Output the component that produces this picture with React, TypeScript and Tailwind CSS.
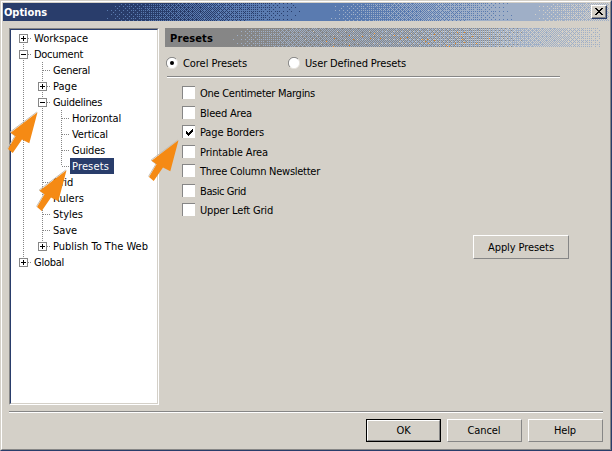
import { useLayoutEffect, useRef, useState } from "react";
import type { ReactNode } from "react";

/** Text fitted to a given pixel width by adjusting its tracking. */
function Label({ text, w, className = "" }: { text: string; w: number; className?: string }) {
  const ref = useRef<HTMLSpanElement>(null);
  const [tracking, setTracking] = useState(0);
  useLayoutEffect(() => {
    const el = ref.current;
    if (el) setTracking((w - el.getBoundingClientRect().width) / text.length);
  }, [text, w]);
  return (
    <span ref={ref} className={`inline-block whitespace-pre ${className}`} style={{ letterSpacing: `${tracking}px` }}>
      {text}
    </span>
  );
}

const BAYER = [
  [0, 32, 8, 40, 2, 34, 10, 42],
  [48, 16, 56, 24, 50, 18, 58, 26],
  [12, 44, 4, 36, 14, 46, 6, 38],
  [60, 28, 52, 20, 62, 30, 54, 22],
  [3, 35, 11, 43, 1, 33, 9, 41],
  [51, 19, 59, 27, 49, 17, 57, 25],
  [15, 47, 7, 39, 13, 45, 5, 37],
  [63, 31, 55, 23, 61, 29, 53, 21],
];

/** Deterministic pseudo-random value in 0..1 for a pixel. */
function noise(x: number, y: number) {
  let n = Math.imul(x + 11, 374761393) ^ Math.imul(y + 7, 668265263);
  n = Math.imul(n ^ (n >>> 13), 1274126177);
  return ((n ^ (n >>> 16)) >>> 0) / 4294967296;
}

/** x position followed by the share of each palette colour there. */
type Stop = [number, ...number[]];

/** Gradient made of 1px dots of a small palette. */
function Dither({ w, h, palette, stops, sparks = false }: { w: number; h: number; palette: string[]; stops: Stop[]; sparks?: boolean }) {
  const paths: Record<string, string> = {};
  for (let y = 0; y < h; y++) {
    for (let x = 0; x < w; x++) {
      let i = 0;
      while (i < stops.length - 2 && x >= stops[i + 1][0]) i++;
      const a = stops[i];
      const b = stops[i + 1];
      const t = (x - a[0]) / (b[0] - a[0]);
      const r = noise(x, y);
      const th = Math.max(0.002, (BAYER[y % 8][x % 8] + 0.5) / 64 + (r - 0.5) * 0.08);
      let k = 0;
      let sum = a[1] + (b[1] - a[1]) * t;
      while (k < palette.length - 1 && th >= sum && sum < 0.9999) {
        k++;
        sum += a[k + 1] + (b[k + 1] - a[k + 1]) * t;
      }
      let c = palette[k];
      if (sparks && x > 160 && x < 325 && y > 2 && r < 0.011) c = "#f58a14";
      paths[c] = (paths[c] || "") + `M${x} ${y}h1v1h-1z`;
    }
  }
  return (
    <svg width={w} height={h} viewBox={`0 0 ${w} ${h}`} shapeRendering="crispEdges" className="absolute inset-0">
      {Object.entries(paths).map(([c, d]) => (
        <path key={c} d={d} fill={c} />
      ))}
    </svg>
  );
}

const TITLE_PALETTE = ["#293d6b", "#5a7bb0", "#9fafc7", "#d4d0c8"];
const TITLE_STOPS: Stop[] = [
  [0, 1, 0, 0, 0],
  [98, 1, 0, 0, 0],
  [298, 0, 1, 0, 0],
  [326, 0, 1, 0, 0],
  [512, 0, 0, 1, 0],
  [530, 0, 0, 1, 0],
  [620, 0, 0, 0.3, 0.7],
];
const HEAD_PALETTE = ["#868686", "#9fafc7", "#d4d0c8"];
const HEAD_STOPS: Stop[] = [
  [0, 1, 0, 0],
  [65, 1, 0, 0],
  [125, 0.6, 0.4, 0],
  [200, 0.5, 0.46, 0.04],
  [260, 0.38, 0.52, 0.1],
  [320, 0.24, 0.51, 0.25],
  [360, 0, 0.66, 0.34],
  [390, 0, 0.5, 0.5],
  [434, 0, 0.15, 0.85],
  [437, 0, 0, 1],
];

const V = "bg-[repeating-linear-gradient(180deg,#868686_0_1px,transparent_1px_2px)]";
const H = "bg-[repeating-linear-gradient(90deg,#868686_0_1px,transparent_1px_2px)]";

type Item = {
  text: string;
  w: number;
  level: number;
  box?: "+" | "-";
  first?: boolean;
  last?: boolean;
  selected?: boolean;
};

const ITEMS: Item[] = [
  { text: "Workspace", w: 54, level: 0, box: "+", first: true },
  { text: "Document", w: 49, level: 0, box: "-" },
  { text: "General", w: 37, level: 1 },
  { text: "Page", w: 24, level: 1, box: "+" },
  { text: "Guidelines", w: 49, level: 1, box: "-" },
  { text: "Horizontal", w: 49, level: 2 },
  { text: "Vertical", w: 36, level: 2 },
  { text: "Guides", w: 33, level: 2 },
  { text: "Presets", w: 37, level: 2, last: true, selected: true },
  { text: "Grid", w: 20, level: 1 },
  { text: "Rulers", w: 31, level: 1 },
  { text: "Styles", w: 30, level: 1 },
  { text: "Save", w: 24, level: 1 },
  { text: "Publish To The Web", w: 95, level: 1, box: "+", last: true },
  { text: "Global", w: 30, level: 0, box: "+", last: true },
];

function TreeRow({ item }: { item: Item }) {
  return (
    <div className="flex h-4">
      {Array.from({ length: item.level }, (_, i) => (
        <div key={i} className="flex w-[19px] shrink-0 pl-[9px]">
          <div className={`h-4 w-px ${V}`} />
        </div>
      ))}
      <div className="grid w-[19px] shrink-0 grid-cols-[9px_1px_9px] grid-rows-[8px_1px_7px]">
        {!item.first && <div className={`col-start-2 row-start-1 ${V}`} />}
        {!item.last && <div className={`col-start-2 row-span-2 row-start-2 ${V}`} />}
        <div className={`col-start-3 row-start-2 mr-px ${H}`} />
        {item.box && (
          <div className="col-span-3 col-start-1 row-span-3 row-start-1 ml-[5px] mt-1 grid size-[9px] place-items-center border border-[#868686] bg-white">
            <svg width="5" height="5" shapeRendering="crispEdges">
              <path d={item.box === "+" ? "M0 2h5v1H0zM2 0h1v5H2z" : "M0 2h5v1H0z"} />
            </svg>
          </div>
        )}
      </div>
      <div className={`h-4 leading-[17px] ${item.selected ? "-ml-px bg-[#293d6b] pl-0.5 pr-[5px] text-white" : "pl-px"}`}>
        <Label text={item.text} w={item.w} />
      </div>
    </div>
  );
}

function Radio({ checked = false }: { checked?: boolean }) {
  return (
    <svg width="12" height="12" viewBox="0 0 12 12" className="shrink-0">
      <circle cx="6" cy="6" r="5.5" fill="#fff" />
      <path d="M2 10A5.500 5.500 0 0 1 10 2" fill="none" stroke="#868686" />
      <path d="M10 2A5.500 5.500 0 0 1 2 10" fill="none" stroke="#e6e3dd" />
      {checked && <circle cx="6" cy="6" r="2" />}
    </svg>
  );
}

const CHECKS = [
  { text: "One Centimeter Margins", w: 115, gap: "mt-0" },
  { text: "Bleed Area", w: 52, gap: "mt-[7px]" },
  { text: "Page Borders", w: 64, gap: "mt-1.5", on: true },
  { text: "Printable Area", w: 68, gap: "mt-[7px]" },
  { text: "Three Column Newsletter", w: 120, gap: "mt-1.5" },
  { text: "Basic Grid", w: 46, gap: "mt-[7px]" },
  { text: "Upper Left Grid", w: 73, gap: "mt-1.5" },
];

function Arrow({ place }: { place: string }) {
  return (
    <svg width="36" height="46" viewBox="0 0 36 46" className={`absolute ${place}`}>
      <path d="M31.800 3 5.200 23l4.800 4-7.500 12.500" fill="none" stroke="#c4bfb6" />
      <path d="M32.500 3.300 5.500 23.700l5 3.600L3 40l4.700 4L17 30.500l7.300 3.700z" fill="#f58a14" />
    </svg>
  );
}

function Button({ children, className }: { children: ReactNode; className: string }) {
  return (
    <button className={`flex items-center justify-center border border-b-[#868686] border-l-white border-r-[#868686] border-t-white ${className}`}>
      {children}
    </button>
  );
}

export default function App() {
  return (
    <div className="relative h-[451px] w-[612px] overflow-hidden border-b border-l border-r border-t border-b-[#293d6b] border-l-[#d4d0c8] border-r-[#293d6b] border-t-[#d4d0c8] bg-[#d4d0c8] font-['DejaVu_Sans_Condensed','DejaVu_Sans',sans-serif] text-[11px] leading-[13px] text-black [font-stretch:condensed]">
      <div className="flex h-full flex-col border border-b-[#868686] border-l-white border-r-[#868686] border-t-white p-px">
        <header className="relative flex h-[18px] shrink-0 items-center justify-between pl-px pr-0.5">
          <Dither w={606} h={18} palette={TITLE_PALETTE} stops={TITLE_STOPS} />
          <Label text="Options" w={43} className="relative font-bold text-white" />
          <button className="relative flex h-3.5 w-4 items-center justify-center border border-b-[#293d6b] border-l-white border-r-[#293d6b] border-t-white bg-[#d4d0c8] shadow-[inset_-1px_-1px_#868686]">
            <svg width="8" height="7" shapeRendering="crispEdges" className="-ml-px -mt-px">
              <path d="M0 0h2v1H0zM6 0h2v1H6zM1 1h2v1H1zM5 1h2v1H5zM2 2h4v1H2zM3 3h2v1H3zM2 4h4v1H2zM1 5h2v1H1zM5 5h2v1H5zM0 6h2v1H0zM6 6h2v1H6z" />
            </svg>
          </button>
        </header>

        <div className="mt-[7px] flex h-[377px] shrink-0">
          <div className="ml-1.5 h-[377px] w-[150px] shrink-0 border border-b-white border-l-[#868686] border-r-white border-t-[#868686]">
            <div className="h-full border border-b-[#d4d0c8] border-l-[#293d6b] border-r-[#d4d0c8] border-t-[#293d6b] bg-white pl-[3px]">
              {ITEMS.map((item) => (
                <TreeRow key={item.text} item={item} />
              ))}
            </div>
          </div>

          <main className="ml-1.5 flex w-[436px] flex-col">
            <div className="relative h-[19px] shrink-0 pl-[5px] pt-1">
              <Dither w={436} h={19} palette={HEAD_PALETTE} stops={HEAD_STOPS} sparks />
              <Label text="Presets" w={43} className="relative font-bold" />
            </div>
            <div className="mt-[9px] flex h-[13px] items-center pl-px">
              <Radio checked />
              <Label text="Corel Presets" w={64} className="ml-[5px] mt-px" />
              <div className="w-[41px]" />
              <Radio />
              <Label text="User Defined Presets" w={101} className="ml-[5px] mt-px" />
            </div>
            <div className="ml-0.5 mt-[7px] h-0.5 w-[393px] border-b border-t border-b-white border-t-[#868686]" />
            <div className="mt-2 pl-[17px]">
              {CHECKS.map((c) => (
                <div key={c.text} className={`flex h-[13px] ${c.gap}`}>
                  <div className="flex size-[13px] items-center justify-center border-l border-t border-[#868686] bg-white">
                    {c.on && (
                      <svg width="7" height="7" shapeRendering="crispEdges">
                        <path d="M0 2h1v3H0zM1 3h1v3H1zM2 4h1v3H2zM3 3h1v3H3zM4 2h1v3H4zM5 1h1v3H5zM6 0h1v3H6z" />
                      </svg>
                    )}
                  </div>
                  <Label text={c.text} w={c.w} className="ml-[5px] leading-[15px]" />
                </div>
              ))}
            </div>
            <Button className="ml-[308px] mt-[19px] h-6 w-24">
              <Label text="Apply Presets" w={66} />
            </Button>
          </main>
        </div>

        <div className="ml-1.5 mt-1.5 h-0.5 w-[594px] shrink-0 border-b border-t border-b-white border-t-[#868686]" />
        <footer className="mt-1.5 flex justify-end gap-1.5 pr-1.5">
          <div className="h-[23px] w-[75px] border border-black">
            <Button className="h-full w-full">
              <Label text="OK" w={14} />
            </Button>
          </div>
          <Button className="h-[23px] w-[75px]">
            <Label text="Cancel" w={33} className="-ml-px" />
          </Button>
          <Button className="h-[23px] w-[75px]">
            <Label text="Help" w={22} className="-ml-px" />
          </Button>
        </footer>
      </div>
      <Arrow place="left-1 top-[108px]" />
      <Arrow place="left-[33px] top-[166px]" />
      <Arrow place="left-[145px] top-[136px]" />
    </div>
  );
}
